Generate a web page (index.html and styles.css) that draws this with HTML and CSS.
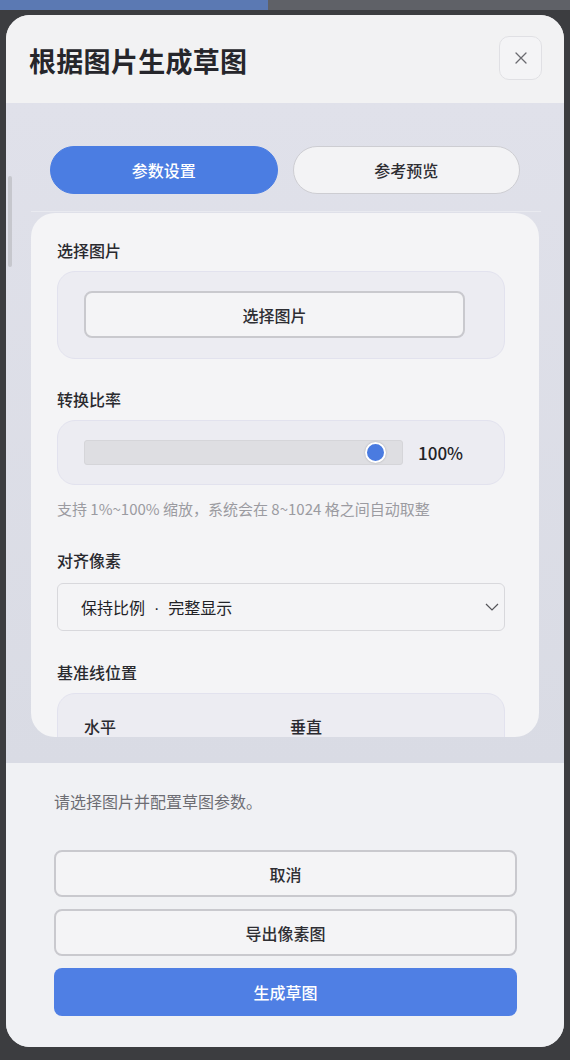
FILE: index.html
```html
<!DOCTYPE html>
<html lang="zh-CN">
<head>
<meta charset="utf-8">
<title>根据图片生成草图</title>
<link rel="stylesheet" href="styles.css">
</head>
<body>
<div class="topstrip"><div class="topstrip-blue"></div><div class="topstrip-gray"></div></div>
<div class="modal">
  <div class="modal-header">
    <h1 class="modal-title">根据图片生成草图</h1>
    <button class="close-btn" aria-label="关闭">
      <svg width="14" height="14" viewBox="0 0 14 14"><path d="M2 2 L12 12 M12 2 L2 12" stroke="#6a6a70" stroke-width="1.3" fill="none" stroke-linecap="round"/></svg>
    </button>
  </div>
  <div class="modal-body">
    <div class="scroll-thumb"></div>
    <div class="tabs">
      <button class="tab tab-active">参数设置</button>
      <button class="tab">参考预览</button>
    </div>
    <div class="tabs-line"></div>
    <div class="card">
      <div class="section">
        <div class="label">选择图片</div>
        <div class="panel panel-pick">
          <button class="btn-outline btn-pick">选择图片</button>
        </div>
      </div>
      <div class="section">
        <div class="label">转换比率</div>
        <div class="panel panel-slider">
          <div class="track"><div class="thumb"></div></div>
          <div class="pct">100%</div>
        </div>
        <div class="hint">支持 1%~100% 缩放，系统会在 8~1024 格之间自动取整</div>
      </div>
      <div class="section section-select">
        <div class="label label-select">对齐像素</div>
        <div class="select">
          <span>保持比例<span class="dot">·</span>完整显示</span>
          <svg width="14" height="8" viewBox="0 0 14 8"><path d="M1 1 L7 7 L13 1" stroke="#55555a" stroke-width="1.2" fill="none"/></svg>
        </div>
      </div>
      <div class="section">
        <div class="label">基准线位置</div>
        <div class="panel panel-grid">
          <div class="sub-label">水平</div>
          <div class="sub-label">垂直</div>
        </div>
      </div>
    </div>
  </div>
  <div class="modal-footer">
    <p class="status">请选择图片并配置草图参数。</p>
    <div class="actions">
      <button class="btn-outline btn-action">取消</button>
      <button class="btn-outline btn-action">导出像素图</button>
      <button class="btn-primary btn-action">生成草图</button>
    </div>
  </div>
</div>
</body>
</html>
```

FILE: styles.css
```css
* { box-sizing: border-box; }
html, body { margin: 0; padding: 0; }
body {
  background: #3c3d40;
  font-family: "Noto Sans CJK SC", "Noto Sans", sans-serif;
  width: 570px;
  height: 1060px;
  overflow: hidden;
}
button { font-family: inherit; cursor: pointer; }

.topstrip { display: flex; height: 10px; }
.topstrip-blue { width: 268px; background: #5b79b3; }
.topstrip-gray { flex: 1; background: #5f6167; }

.modal {
  margin: 5px 0 0 6px;
  width: 558px;
  height: 1032px;
  border-radius: 24px;
  background: #f2f2f4;
  overflow: hidden;
  display: flex;
  flex-direction: column;
}

.modal-header {
  height: 88px;
  flex: none;
  display: flex;
  align-items: center;
  justify-content: space-between;
  padding: 0 22px 0 23px;
  background: #f2f2f3;
}
.modal-title {
  margin: 2px 0 0 0;
  font-size: 27px;
  font-weight: 700;
  color: #26262b;
  letter-spacing: 0.3px;
}
.close-btn {
  width: 43px;
  height: 44px;
  margin-top: -3px;
  border-radius: 10px;
  border: 1px solid #e0e0e4;
  background: #f4f4f6;
  display: flex;
  align-items: center;
  justify-content: center;
  padding: 0;
}

.modal-body {
  position: relative;
  height: 660px;
  flex: none;
  background: linear-gradient(#e0e1ea, #d9dbe4);
  padding: 43px 25px 0 25px;
}
.scroll-thumb {
  position: absolute;
  left: 2px;
  top: 73px;
  width: 4px;
  height: 91px;
  border-radius: 2px;
  background: #c6c7cd;
}

.tabs {
  display: flex;
  gap: 15px;
  padding: 0 19px;
  height: 48px;
}
.tab {
  flex: 1;
  height: 48px;
  border-radius: 24px;
  border: 1.5px solid #cdcdd2;
  background: #f3f3f5;
  font-size: 16px;
  font-weight: 500;
  color: #2e2e33;
}
.tab-active {
  background: #4b7de2;
  border-color: #4b7de2;
  color: #ffffff;
}
.tabs-line {
  height: 1px;
  margin-top: 17px;
  margin-right: -2px;
  background: #e9eaf0;
}

.card {
  margin-top: 1px;
  height: 524px;
  overflow: hidden;
  border-radius: 24px;
  background: #f4f4f6;
  padding: 26px 34px 0 26px;
}

.section { margin-bottom: 29px; }
.section-select { margin-bottom: 30px; }
.label {
  font-size: 16px;
  font-weight: 500;
  line-height: 22px;
  color: #2a2a2f;
  margin-bottom: 10px;
}
.label-select { margin-bottom: 12px; }

.panel {
  border-radius: 18px;
  background: #ececf2;
  border: 1px solid #e2e2ee;
}
.panel-pick { padding: 19px 39px 20px 26px; }
.btn-outline {
  background: #f4f4f6;
  border: 2px solid #c9c9ce;
  border-radius: 8px;
  font-size: 16px;
  font-weight: 500;
  color: #2e2e33;
}
.btn-pick { width: 100%; height: 47px; }

.panel-slider {
  display: flex;
  align-items: center;
  padding: 19px 26px;
  height: 65px;
}
.track {
  position: relative;
  width: 319px;
  height: 25px;
  border-radius: 3px;
  background: #dedee2;
  border: 1px solid #d5d5d9;
}
.thumb {
  position: absolute;
  left: 280px;
  top: 1px;
  width: 21px;
  height: 21px;
  border-radius: 50%;
  background: #4a7be0;
  border: 2px solid #ffffff;
  box-shadow: 0 0 2px rgba(0,0,0,0.25);
}
.pct {
  margin-left: 15px;
  font-size: 17px;
  font-weight: 500;
  color: #222226;
}
.hint {
  margin-top: 13px;
  font-size: 15px;
  line-height: 22px;
  color: #9b9ba1;
}

.select {
  height: 48px;
  border: 1px solid #d8d8dc;
  border-radius: 6px;
  background: #f4f4f6;
  display: flex;
  align-items: center;
  justify-content: space-between;
  padding: 0 5px 0 23px;
  font-size: 16px;
  color: #222226;
}
.dot {
  font-family: "Liberation Sans", sans-serif;
  padding: 0 9px;
}

.panel-grid {
  display: grid;
  grid-template-columns: 1fr 1fr;
  column-gap: 18px;
  padding: 21px 26px 40px 26px;
}
.sub-label {
  font-size: 16px;
  font-weight: 500;
  line-height: 22px;
  color: #2a2a2f;
}

.modal-footer {
  flex: 1;
  background: #f0f1f4;
  padding: 26px 47px 0 48px;
}
.status {
  margin: 0;
  font-size: 16px;
  line-height: 24px;
  color: #6d6d73;
}
.actions {
  margin-top: 37px;
  display: flex;
  flex-direction: column;
  gap: 12px;
}
.btn-action { height: 47px; width: 100%; }
.btn-primary {
  height: 48px;
  border: none;
  border-radius: 8px;
  background: #4f7fe4;
  color: #ffffff;
  font-size: 16px;
  font-weight: 500;
}
```
